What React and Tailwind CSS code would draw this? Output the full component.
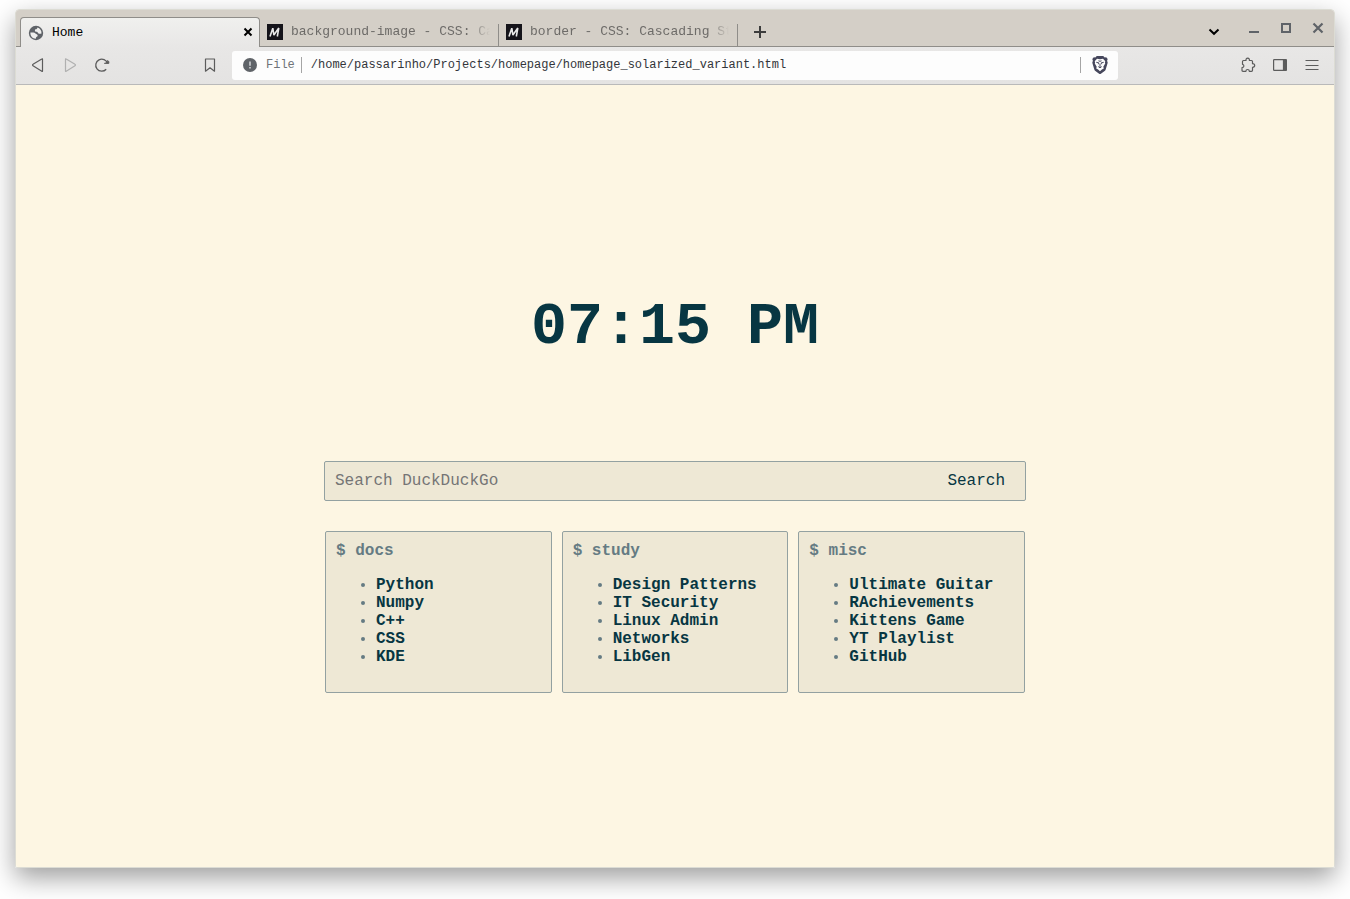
import React from "react";

const groups = [
  { title: "docs", links: ["Python", "Numpy", "C++", "CSS", "KDE"] },
  { title: "study", links: ["Design Patterns", "IT Security", "Linux Admin", "Networks", "LibGen"] },
  { title: "misc", links: ["Ultimate Guitar", "RAchievements", "Kittens Game", "YT Playlist", "GitHub"] },
];

function Icon({ children, className = "" }) {
  return (
    <svg
      viewBox="0 0 16 16"
      className={`size-4 ${className}`}
      fill="none"
      stroke="currentColor"
      strokeWidth="1.2"
      strokeLinejoin="round"
      aria-hidden="true"
    >
      {children}
    </svg>
  );
}

function IconButton({ label, children, className = "" }) {
  return (
    <button type="button" aria-label={label} className={`flex h-8 w-8 items-center justify-center ${className}`}>
      {children}
    </button>
  );
}

function GlobeIcon() {
  return (
    <svg viewBox="0 0 16 16" className="size-4 shrink-0" aria-hidden="true">
      <circle cx="8" cy="8" r="7.2" fill="#5f6368" />
      <path
        d="M2.400 7.600H5.500C7 7.600 7.200 8.600 8 9c1.200.3 1.900 1 1.600 2.100-.2.900-1.600.8-1.700 1.800v.9C4.500 13.800 2.200 11.300 2.400 7.600z"
        fill="#efefed"
      />
      <path
        d="M9.400 2.500c-.1 1.200-.7 1.700-1.700 1.800-.9.100-.8 1-.7 1.600.2.900 1.300.6 2 .9.900.4.800 1.600 1.900 1.900.9.200 1.600-.2 2.600-.3C13.700 5.500 12 3.300 9.400 2.500z"
        fill="#efefed"
      />
    </svg>
  );
}

function ShieldLion() {
  return (
    <svg viewBox="0 0 16 18" className="h-[18px] w-4" aria-hidden="true">
      <path
        d="M4.800 0h6.400l1.500 1.500 1.500-.2L15.700 3l-.6 1.700.6 2-2.100 7q-.3.900-1 1.400L8.900 17.700q-.9.600-1.800 0L3.400 15.100q-.7-.5-1-1.400L.3 6.700l.6-2L.3 3l1.500-1.700 1.500.2z"
        fill="#46475c"
      />
      <path
        d="M5 2.800 8 3.300l3-.5 2.300 2.500-.4 1 .3 1.300-1.900 3.100.5 1.700-1.900 1.200L8 15.200l-1.900-1.600-1.900-1.200.5-1.700L2.800 7.600l.3-1.300-.4-1z"
        fill="#fdfdfd"
      />
      <path
        d="M4.300 6.300 7 7l-.5 1.200M11.700 6.300 9 7l.5 1.200M8 8v3M6.300 10.600 8 11.800l1.700-1.200M6.500 4.800 8 5.300l1.500-.5"
        fill="none"
        stroke="#46475c"
        strokeWidth="1"
      />
    </svg>
  );
}

function MdnMark() {
  return (
    <svg viewBox="0 0 16 16" className="size-4 shrink-0" aria-hidden="true">
      <rect width="16" height="16" fill="#15141a" />
      <path
        d="M3 12.500 5.800 4.200 6.900 11 11.800 4 10.300 12.500"
        fill="none"
        stroke="#e8e8e8"
        strokeWidth="1.600"
        strokeLinejoin="bevel"
      />
    </svg>
  );
}

function InactiveTab({ title }) {
  return (
    <div className="flex w-[239px] min-w-0 items-center border-b border-[#8f8d89] pt-2 pl-[7px]">
      <MdnMark />
      <a
        href="#tab"
        className="ml-2 h-5 w-[203px] overflow-hidden whitespace-nowrap text-[13px] leading-5 text-[#6d6b68] [mask-image:linear-gradient(to_right,black_88%,transparent_98%)]"
      >
        {title}
      </a>
      <span className="ml-auto h-[22px] w-px self-end bg-[#8f8d89]" />
    </div>
  );
}

function TabStrip() {
  return (
    <div className="flex h-[37px] rounded-t-[3px] bg-[#d4cfc7] font-['Liberation_Mono',monospace]">
      <div className="w-1 shrink-0 border-b border-[#8f8d89]" />
      <div className="mt-[7px] flex w-60 min-w-0 items-center rounded-t-[4px] border border-b-0 border-[#8f8d89] bg-linear-to-b from-[#f0f0ee] to-[#e8e7e6] pr-[3px] pl-[7px]">
        <GlobeIcon />
        <span className="ml-2 flex-1 text-[13px] leading-5 text-black">Home</span>
        <button type="button" aria-label="Close tab" className="flex size-4 items-center justify-center text-black">
          <Icon>
            <path d="m4.500 3.500 7 7m0-7-7 7" strokeWidth="2" />
          </Icon>
        </button>
      </div>
      <InactiveTab title="background-image - CSS: Ca" />
      <InactiveTab title="border - CSS: Cascading St" />
      <div className="flex flex-1 items-center border-b border-[#8f8d89]">
        <IconButton label="New tab" className="mt-2 ml-1.5 text-[#3c3c3c]">
          <Icon>
            <path d="M8 2v12M2 8h12" strokeWidth="2" />
          </Icon>
        </IconButton>
        <IconButton label="Search tabs" className="mt-2 mr-2 ml-auto text-black">
          <Icon>
            <path d="m3.500 5.500 4.500 4.300L12.500 5.500" strokeWidth="2" strokeLinejoin="miter" />
          </Icon>
        </IconButton>
        <IconButton label="Minimize" className="text-[#5f6368]">
          <Icon>
            <path d="M3 12h10" strokeWidth="2" />
          </Icon>
        </IconButton>
        <IconButton label="Maximize" className="text-[#5f6368]">
          <Icon>
            <path d="M4 4h8v8H4z" strokeWidth="2" strokeLinejoin="miter" />
          </Icon>
        </IconButton>
        <IconButton label="Close window" className="text-[#5f6368]">
          <Icon>
            <path d="m3.500 3.500 9 9m0-9-9 9" strokeWidth="2.200" />
          </Icon>
        </IconButton>
      </div>
    </div>
  );
}

function Toolbar() {
  return (
    <div className="flex h-[38px] items-center border-b border-[#b9b9b9] bg-linear-to-b from-[#e8e7e6] to-[#e4e3e2] font-['Liberation_Mono',monospace] text-[#5c5c5c]">
      <div className="flex w-[216px] shrink-0 items-center px-1.5 pb-0.5">
        <IconButton label="Back">
          <Icon>
            <path d="M12.500 2.300v11.600q0 .8-.7.300L3 8.700a.8.8 0 0 1 0-1.400L11.800 2q.7-.5.7.3z" />
          </Icon>
        </IconButton>
        <IconButton label="Forward" className="text-[#b0b0b0]">
          <Icon>
            <path d="M3.500 2.300v11.600q0 .8.700.3L13 8.700a.8.8 0 0 0 0-1.400L4.200 2q-.7-.5-.7.3z" />
          </Icon>
        </IconButton>
        <IconButton label="Reload">
          <Icon>
            <path d="M12.200 12.200A6 6 0 1 1 13.500 6.500" strokeWidth="1.300" />
            <path d="M10.300 6.400h4.600V4.500l-1.500-1-.2 2z" fill="currentColor" strokeWidth=".8" />
          </Icon>
        </IconButton>
        <IconButton label="Bookmark this page" className="ml-auto">
          <Icon>
            <path d="M3.500 2h9v12.200L8 10.800l-4.500 3.400z" />
          </Icon>
        </IconButton>
      </div>
      <div className="flex h-[29px] min-w-0 flex-1 items-center rounded-[3px] bg-[#fdfdfd] pr-2.5 pb-px pl-2.5 text-[12px]">
        <svg viewBox="0 0 16 16" className="size-4 shrink-0" aria-hidden="true">
          <circle cx="8" cy="8" r="7" fill="#5f6368" />
          <path d="M8 4.500v4.200M8 10v1.600" stroke="#d5d6d8" strokeWidth="1.500" />
        </svg>
        <span className="ml-2 text-[#6f7378]">File</span>
        <span className="ml-1.5 h-4 w-px bg-[#a5a5a5]" />
        <input
          aria-label="Address"
          defaultValue="/home/passarinho/Projects/homepage/homepage_solarized_variant.html"
          className="ml-[9px] min-w-0 flex-1 bg-transparent text-[#33353a] outline-none"
        />
        <span className="mr-[11px] h-4 w-px bg-[#a5a5a5]" />
        <button type="button" aria-label="Shields">
          <ShieldLion />
        </button>
      </div>
      <div className="flex w-[216px] shrink-0 items-center justify-end px-1.5 pb-0.5">
        <IconButton label="Extensions">
          <Icon>
            <path d="M2.500 4.500q0-1 1-1H6q-.3-2.300 1.700-2.300T9.400 3.500h2.100q1 0 1 1v2.200q2.200.1 2.200 1.800t-2.200 1.800v3q0 1-1 1H9.300q0-1.800-1.700-1.800t-1.700 1.800H3q-1 0-1-1v-2.600q1.900-.2 1.900-1.700T2.500 7.300z" />
          </Icon>
        </IconButton>
        <IconButton label="Sidebar">
          <Icon>
            <rect x="1.600" y="2.600" width="12.800" height="10.800" rx=".6" />
            <path d="M11.500 3h2.700v10h-2.700z" fill="currentColor" />
          </Icon>
        </IconButton>
        <IconButton label="Menu">
          <Icon>
            <path d="M1.500 3.500h13M1.500 8.500h13M1.500 12.500h13" />
          </Icon>
        </IconButton>
      </div>
    </div>
  );
}

function HomePage() {
  return (
    <main className="flex flex-1 flex-col items-center justify-center rounded-b-[2px] bg-[#fdf6e3] font-['Liberation_Mono',monospace] text-[16px] leading-[18px] text-[#657b83]">
      <h1 className="mt-[34px] mb-[100px] text-[60px] leading-[68px] font-bold text-[#073642]">07:15 PM</h1>
      <form
        onSubmit={(e) => e.preventDefault()}
        className="mb-[30px] flex h-10 w-full max-w-[702px] items-center rounded-[2px] border border-[#93a1a1] bg-[#eee8d5]"
      >
        <input
          type="search"
          aria-label="Search DuckDuckGo"
          placeholder="Search DuckDuckGo"
          className="h-full min-w-0 flex-1 bg-transparent px-2.5 text-[#073642] outline-none placeholder:text-[#757575]"
        />
        <button type="submit" className="h-full px-5 text-[#073642]">
          Search
        </button>
      </form>
      <div className="grid w-full max-w-[700px] grid-cols-3 gap-2.5">
        {groups.map((group) => (
          <section key={group.title} className="rounded-[2px] border border-[#93a1a1] bg-[#eee8d5] p-2.5">
            <h2 className="font-bold">$ {group.title}</h2>
            <ul className="my-4 list-disc pl-10">
              {group.links.map((link) => (
                <li key={link}>
                  <a href="#link" className="font-bold text-[#073642]">
                    {link}
                  </a>
                </li>
              ))}
            </ul>
          </section>
        ))}
      </div>
    </main>
  );
}

export default function App() {
  return (
    <div className="flex min-h-screen flex-col bg-white px-[15px] pt-[9px] pb-[31px]">
      <div className="flex flex-1 flex-col rounded-t-[4px] rounded-b-[2px] border border-[#dcdcd4] shadow-[0_10px_26px_rgba(0,0,0,0.38)]">
        <TabStrip />
        <Toolbar />
        <HomePage />
      </div>
    </div>
  );
}
